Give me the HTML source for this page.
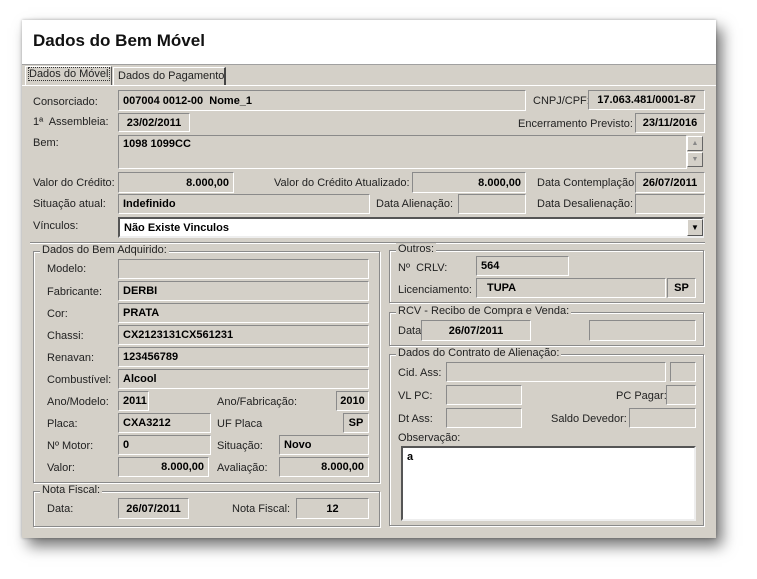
<!DOCTYPE html><html><head><meta charset="utf-8"><style>
body{margin:0;width:757px;height:579px;background:#fff;position:relative;overflow:hidden;font-family:"Liberation Sans",sans-serif;font-size:11px;color:#000}
#w{position:absolute;left:22px;top:20px;width:694px;height:518px;background:#d4d0c8;box-shadow:6px 8px 14px rgba(0,0,0,.55),0 0 3px rgba(0,0,0,.3)}
#t{position:absolute;left:22px;top:20px;width:694px;height:44px;background:#fff;border-bottom:1px solid #a0a0a0}
#t span{position:absolute;left:11px;top:11px;font-size:17px;font-weight:bold;color:#111}
.a{position:absolute}
.l{position:absolute;white-space:nowrap;color:#222}
.f{position:absolute;box-sizing:border-box;border:1px solid;border-color:#8a8a8a #fff #fff #8a8a8a;background:#d4d0c8;font-weight:bold;padding:0 4px;white-space:nowrap;display:flex;align-items:center}
.r{justify-content:flex-end}.c{justify-content:center}
.g{position:absolute;box-sizing:border-box;border:1px solid #8a8a8a;box-shadow:1px 1px 0 #fff,inset 1px 1px 0 #fff}
.g>b{position:absolute;top:-8px;left:6px;background:#d4d0c8;font-weight:normal;padding:0 2px;color:#222}
</style></head><body>
<div id="w"></div><div id="t"><span>Dados do Bem Móvel</span></div>
<div class="a" style="left:25px;top:66px;width:87px;height:19px;border:1px solid #fff;border-right-color:#555;border-bottom:none;background:#d4d0c8;box-sizing:border-box"></div>
<div class="l" style="left:29px;top:68px;outline:1px dotted #333">Dados do Móvel</div>
<div class="a" style="left:113px;top:67px;width:113px;height:18px;border:1px solid #fff;border-right:2px solid #444;border-bottom:none;box-sizing:border-box"></div>
<div class="l" style="left:118px;top:70px">Dados do Pagamento</div>
<div class="a" style="left:22px;top:85px;width:694px;height:1px;background:#fff"></div>

<div class="l" style="left:33px;top:96px">Consorciado:</div><div class="f" style="left:118px;top:90px;width:408px;height:21px">007004 0012-00&nbsp; Nome_1</div>
<div class="l" style="left:533px;top:95px">CNPJ/CPF:</div><div class="f c" style="left:588px;top:90px;width:117px;height:20px">17.063.481/0001-87</div>
<div class="l" style="left:33px;top:116px">1ª&nbsp; Assembleia:</div><div class="f c" style="left:118px;top:113px;width:72px;height:19px">23/02/2011</div>
<div class="l" style="left:518px;top:118px">Encerramento Previsto:</div><div class="f c" style="left:635px;top:113px;width:70px;height:20px">23/11/2016</div>
<div class="l" style="left:33px;top:137px">Bem:</div><div class="f" style="left:118px;top:135px;width:569px;height:34px;align-items:flex-start;padding-top:2px">1098 1099CC</div>
<div class="a" style="left:687px;top:136px;width:16px;height:15px;background:#d4d0c8;border:1px solid;border-color:#fff #666 #666 #fff;box-sizing:border-box;font-size:7px;color:#888;text-align:center;line-height:13px">▲</div>
<div class="a" style="left:687px;top:152px;width:16px;height:15px;background:#d4d0c8;border:1px solid;border-color:#fff #666 #666 #fff;box-sizing:border-box;font-size:7px;color:#888;text-align:center;line-height:13px">▼</div>
<div class="l" style="left:33px;top:177px">Valor do Crédito:</div><div class="f r" style="left:118px;top:172px;width:116px;height:21px">8.000,00</div>
<div class="l" style="left:274px;top:177px">Valor do Crédito Atualizado:</div><div class="f r" style="left:412px;top:172px;width:114px;height:21px">8.000,00</div>
<div class="l" style="left:537px;top:177px">Data Contemplação:</div><div class="f c" style="left:635px;top:172px;width:70px;height:21px">26/07/2011</div>
<div class="l" style="left:33px;top:198px">Situação atual:</div><div class="f" style="left:118px;top:194px;width:252px;height:20px">Indefinido</div>
<div class="l" style="left:376px;top:198px">Data Alienação:</div><div class="f" style="left:458px;top:194px;width:68px;height:20px"></div>
<div class="l" style="left:537px;top:198px">Data Desalienação:</div><div class="f" style="left:635px;top:194px;width:70px;height:20px"></div>
<div class="l" style="left:33px;top:220px">Vínculos:</div><div class="f" style="left:118px;top:217px;width:586px;height:21px;background:#fff;border:2px solid;border-color:#555 #eee #eee #555">Não Existe Vinculos</div>
<div class="a" style="left:687px;top:219px;width:16px;height:17px;background:#d4d0c8;border:1px solid;border-color:#fff #555 #555 #fff;box-sizing:border-box;font-size:8px;text-align:center;line-height:15px">▼</div>
<div class="a" style="left:30px;top:242px;width:675px;height:1px;background:#8a8a8a;box-shadow:0 1px 0 #fff"></div>

<div class="g" style="left:33px;top:251px;width:347px;height:232px"><b>Dados do Bem Adquirido:</b></div>
<div class="l" style="left:47px;top:263px">Modelo:</div><div class="f" style="left:118px;top:259px;width:251px;height:20px"></div>
<div class="l" style="left:47px;top:286px">Fabricante:</div><div class="f" style="left:118px;top:281px;width:251px;height:20px">DERBI</div>
<div class="l" style="left:47px;top:308px">Cor:</div><div class="f" style="left:118px;top:303px;width:251px;height:20px">PRATA</div>
<div class="l" style="left:47px;top:330px">Chassi:</div><div class="f" style="left:118px;top:325px;width:251px;height:20px">CX2123131CX561231</div>
<div class="l" style="left:47px;top:352px">Renavan:</div><div class="f" style="left:118px;top:347px;width:251px;height:20px">123456789</div>
<div class="l" style="left:47px;top:374px">Combustível:</div><div class="f" style="left:118px;top:369px;width:251px;height:20px">Alcool</div>
<div class="l" style="left:47px;top:396px">Ano/Modelo:</div><div class="f" style="left:118px;top:391px;width:31px;height:20px">2011</div>
<div class="l" style="left:217px;top:396px">Ano/Fabricação:</div><div class="f c" style="left:336px;top:391px;width:33px;height:20px">2010</div>
<div class="l" style="left:47px;top:418px">Placa:</div><div class="f" style="left:118px;top:413px;width:93px;height:20px">CXA3212</div>
<div class="l" style="left:217px;top:418px">UF Placa</div><div class="f c" style="left:343px;top:413px;width:26px;height:20px">SP</div>
<div class="l" style="left:47px;top:440px">Nº Motor:</div><div class="f" style="left:118px;top:435px;width:93px;height:20px">0</div>
<div class="l" style="left:217px;top:440px">Situação:</div><div class="f" style="left:279px;top:435px;width:90px;height:20px">Novo</div>
<div class="l" style="left:47px;top:462px">Valor:</div><div class="f r" style="left:118px;top:457px;width:91px;height:20px">8.000,00</div>
<div class="l" style="left:217px;top:462px">Avaliação:</div><div class="f r" style="left:279px;top:457px;width:90px;height:20px">8.000,00</div>

<div class="g" style="left:33px;top:491px;width:347px;height:36px"><b>Nota Fiscal:</b></div>
<div class="l" style="left:47px;top:503px">Data:</div><div class="f c" style="left:118px;top:498px;width:71px;height:21px">26/07/2011</div>
<div class="l" style="left:232px;top:503px">Nota Fiscal:</div><div class="f c" style="left:296px;top:498px;width:73px;height:21px">12</div>

<div class="g" style="left:389px;top:250px;width:315px;height:53px"><b>Outros:</b></div>
<div class="l" style="left:398px;top:262px">Nº&nbsp; CRLV:</div><div class="f" style="left:476px;top:256px;width:93px;height:20px">564</div>
<div class="l" style="left:398px;top:284px">Licenciamento:</div><div class="f" style="left:476px;top:278px;width:190px;height:20px;padding-left:10px">TUPA</div>
<div class="f c" style="left:667px;top:278px;width:29px;height:20px">SP</div>
<div class="g" style="left:389px;top:312px;width:315px;height:34px"><b>RCV - Recibo de Compra e Venda:</b></div>
<div class="l" style="left:398px;top:325px">Data:</div><div class="f c" style="left:421px;top:320px;width:110px;height:21px">26/07/2011</div>
<div class="f" style="left:589px;top:320px;width:107px;height:21px"></div>
<div class="g" style="left:389px;top:354px;width:315px;height:172px"><b>Dados do Contrato de Alienação:</b></div>
<div class="l" style="left:398px;top:367px">Cid. Ass:</div><div class="f" style="left:446px;top:362px;width:220px;height:20px"></div><div class="f" style="left:670px;top:362px;width:26px;height:20px"></div>
<div class="l" style="left:398px;top:390px">VL PC:</div><div class="f" style="left:446px;top:385px;width:76px;height:20px"></div>
<div class="l" style="left:616px;top:390px">PC Pagar:</div><div class="f" style="left:666px;top:385px;width:30px;height:20px"></div>
<div class="l" style="left:398px;top:413px">Dt Ass:</div><div class="f" style="left:446px;top:408px;width:76px;height:20px"></div>
<div class="l" style="left:551px;top:413px">Saldo Devedor:</div><div class="f" style="left:629px;top:408px;width:67px;height:20px"></div>
<div class="l" style="left:398px;top:432px">Observação:</div>
<div class="f" style="left:401px;top:446px;width:295px;height:75px;background:#fff;border:2px solid;border-color:#555 #eee #eee #555;align-items:flex-start;padding-top:3px">a</div>
</body></html>
